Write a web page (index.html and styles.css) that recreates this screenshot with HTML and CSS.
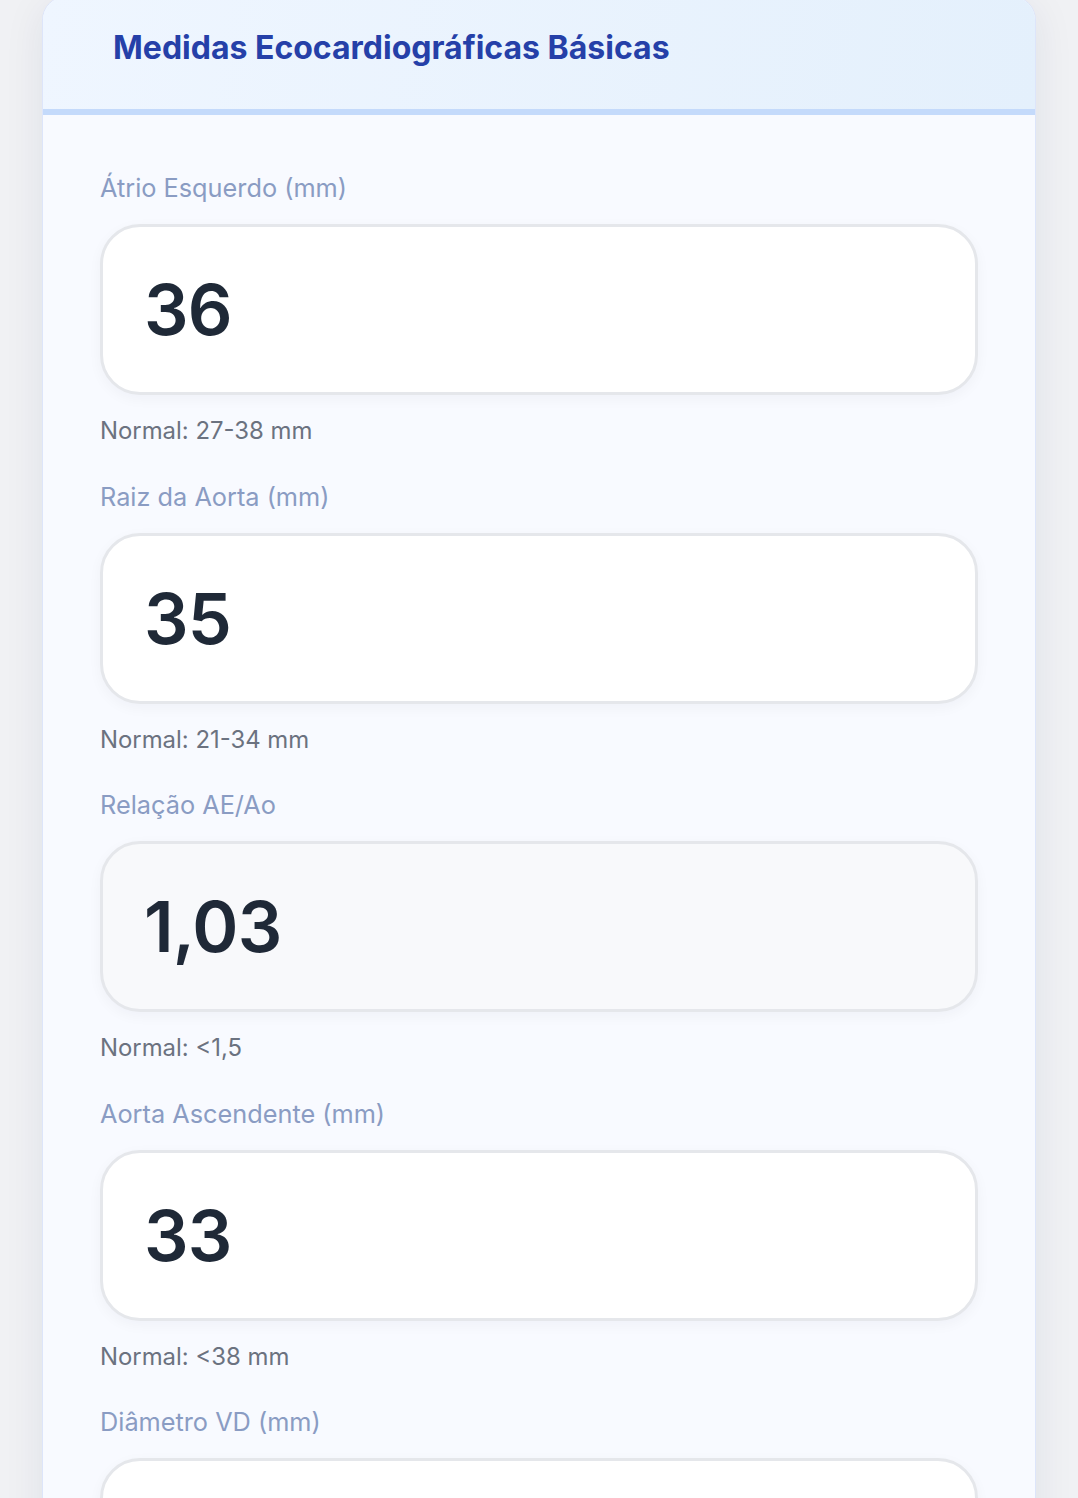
FILE: index.html
```html
<!DOCTYPE html>
<html lang="pt">
<head>
<meta charset="utf-8">
<title>Medidas Ecocardiográficas Básicas</title>
<link rel="stylesheet" href="styles.css">
</head>
<body>
<section class="card">
  <header class="card-header">
    <h2 class="card-title">Medidas Ecocardiográficas Básicas</h2>
  </header>
  <div class="card-body">
    <div class="field">
      <label class="field-label">Átrio Esquerdo (mm)</label>
      <div class="field-input">36</div>
      <p class="field-hint">Normal: 27-38 mm</p>
    </div>
    <div class="field">
      <label class="field-label">Raiz da Aorta (mm)</label>
      <div class="field-input">35</div>
      <p class="field-hint">Normal: 21-34 mm</p>
    </div>
    <div class="field">
      <label class="field-label">Relação AE/Ao</label>
      <div class="field-input readonly">1,03</div>
      <p class="field-hint">Normal: &lt;1,5</p>
    </div>
    <div class="field">
      <label class="field-label">Aorta Ascendente (mm)</label>
      <div class="field-input">33</div>
      <p class="field-hint">Normal: &lt;38 mm</p>
    </div>
    <div class="field">
      <label class="field-label">Diâmetro VD (mm)</label>
      <div class="field-input"></div>
    </div>
  </div>
</section>
</body>
</html>
```

FILE: styles.css
```css
* { box-sizing: border-box; }
html, body { margin: 0; padding: 0; }
body {
  background: #f0f1f4;
  font-family: Inter, "Noto Sans", sans-serif;
  padding: 0 42px;
  overflow: hidden;
  height: 1498px;
}
.card {
  margin-top: -4px;
  background: #f8faff;
  border: 1px solid #dde5fa;
  border-radius: 24px;
  box-shadow: 0 8px 40px rgba(30, 40, 80, 0.08);
  overflow: hidden;
}
.card-header {
  background: linear-gradient(100deg, #eff6ff 0%, #e4f0fc 100%);
  border-bottom: 6px solid #c4dafb;
  height: 118px;
  padding: 0 0 0 70px;
  display: flex;
  align-items: center;
}
.card-title {
  margin: 0 0 12px;
  font-size: 32px;
  font-weight: 700;
  color: #2540a8;
  letter-spacing: 0;
}
.card-body {
  padding: 57px 57px 0;
}
.field { margin-bottom: 34.5px; }
.field-label {
  display: block;
  font-size: 25.3px;
  line-height: 32px;
  color: #8a9cc3;
  margin-bottom: 20px;
}
.field-input {
  height: 171px;
  background: #ffffff;
  border: 3px solid #e5e7eb;
  border-radius: 40px;
  box-shadow: 0 4px 14px rgba(20, 30, 60, 0.04);
  padding: 0 0 0 41px;
  display: flex;
  align-items: center;
  font-size: 70px;
  font-weight: 600;
  color: #1f2937;
  letter-spacing: -0.8px;
}
.field-input.readonly { background: #f8f9fb; }
.field-hint {
  margin: 21px 0 0;
  font-size: 23.9px;
  line-height: 30px;
  color: #6b7280;
}
```
